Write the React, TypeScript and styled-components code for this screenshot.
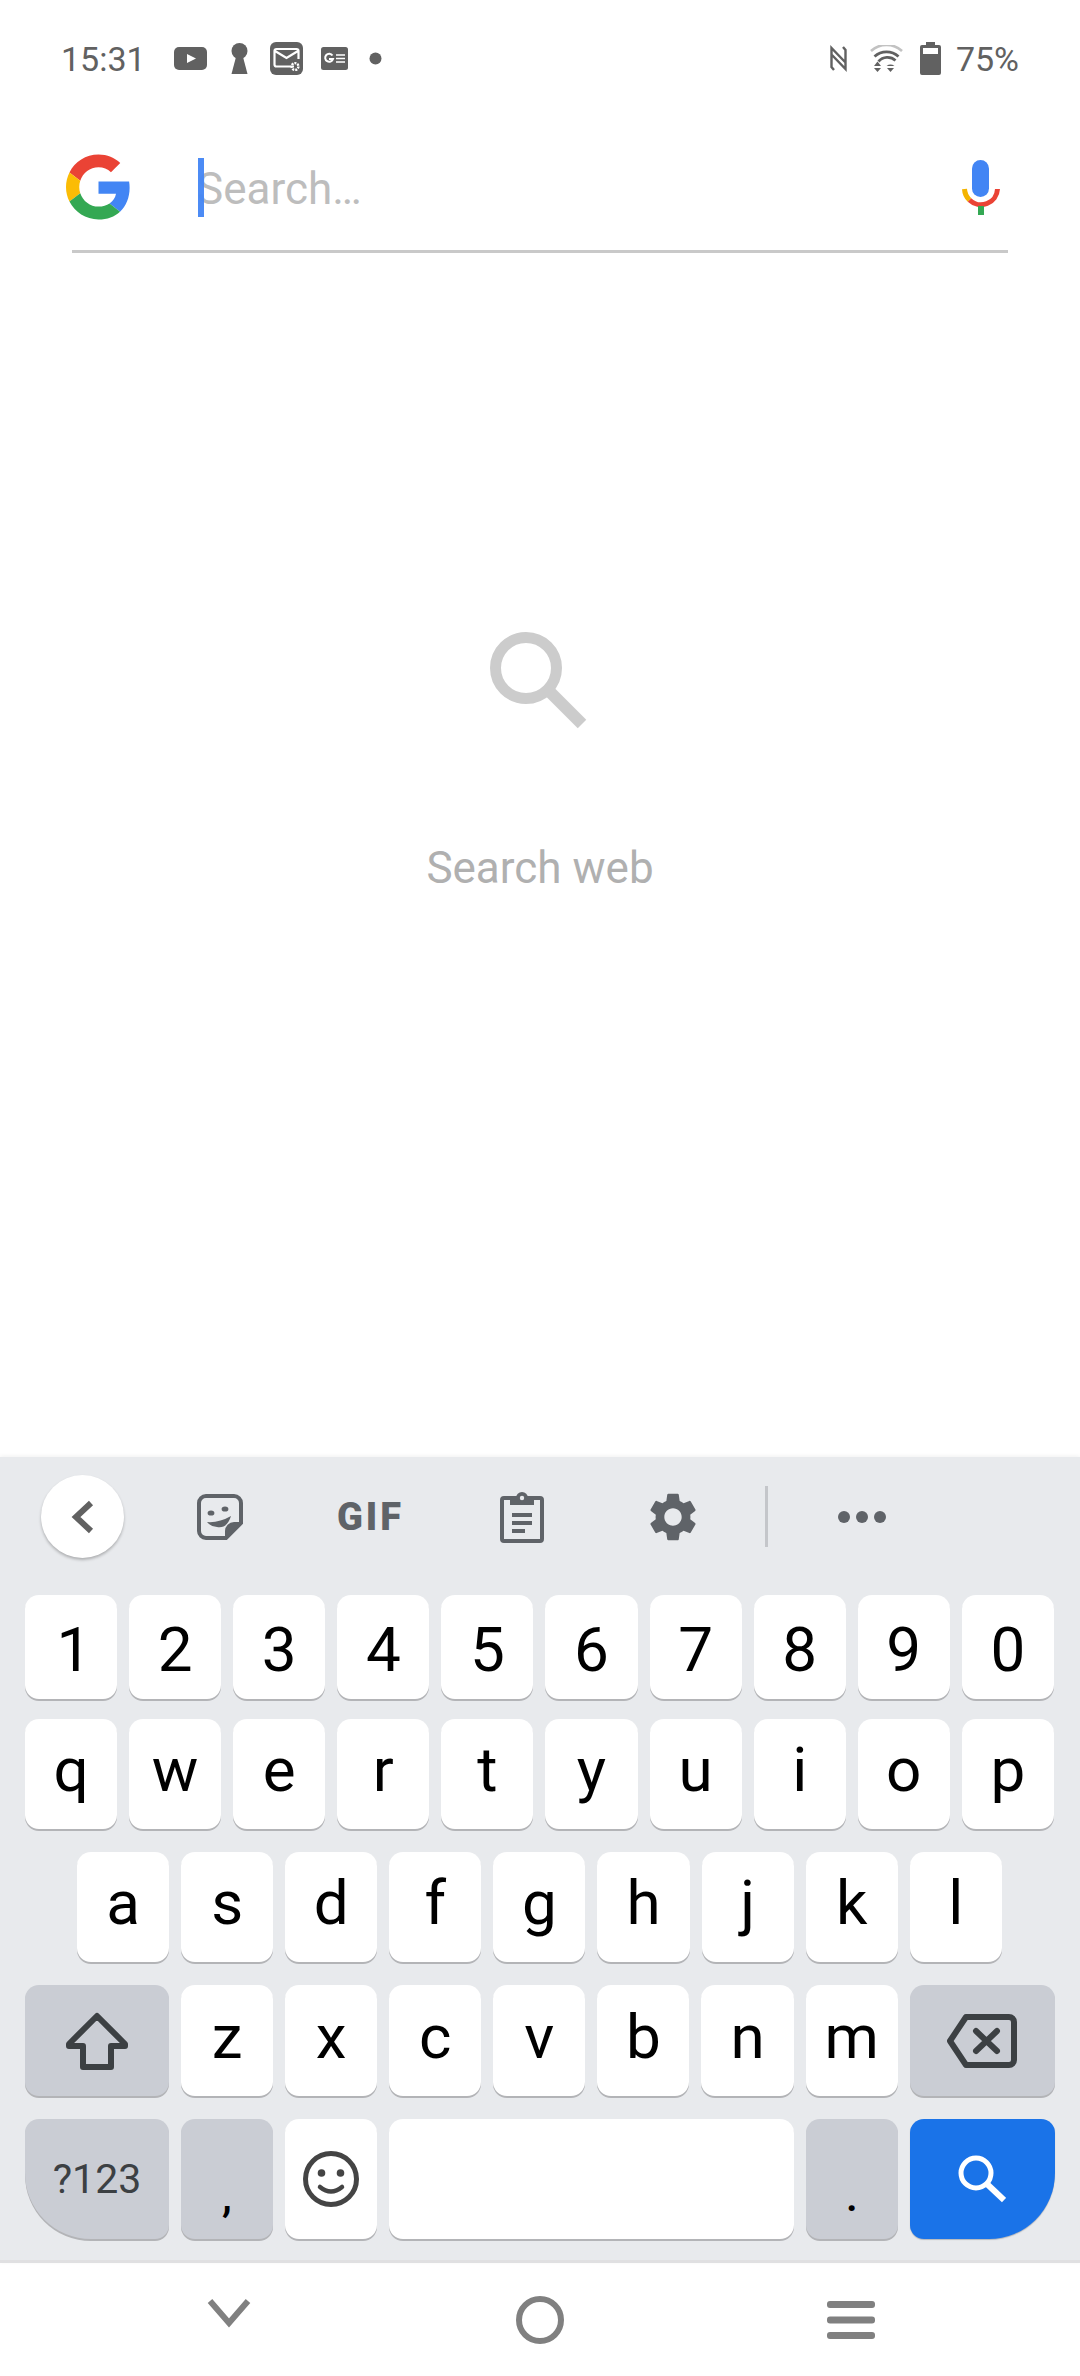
import styled, { createGlobalStyle } from 'styled-components';

const GlobalStyle = createGlobalStyle`
  html, body {
    margin: 0;
    padding: 0;
    background: #fff;
    font-family: Roboto, "Liberation Sans", sans-serif;
  }
`;

const Screen = styled.div`
  width: 1080px;
  height: 2376px;
  display: flex;
  flex-direction: column;
  overflow: hidden;
  background: #fff;
`;

const StatusBar = styled.div`
  height: 116px;
  padding: 0 61px;
  display: flex;
  align-items: center;
  color: #616161;
  font-size: 34px;
  flex-shrink: 0;
`;

const StatusGroup = styled.div<{ $push?: boolean }>`
  display: flex;
  align-items: center;
  margin-left: ${({ $push }) => ($push ? 'auto' : '0')};
`;

const StatusIcon = styled.svg<{ $gap?: number }>`
  display: block;
  margin-left: ${({ $gap }) => $gap ?? 0}px;
  fill: #616161;
`;

const StatusText = styled.span<{ $gap?: number }>`
  margin-left: ${({ $gap }) => $gap ?? 0}px;
  line-height: 36px;
  position: relative;
  top: 1px;
`;

const SearchRow = styled.div`
  height: 134px;
  box-sizing: border-box;
  padding: 8px 80px 0 66px;
  display: flex;
  align-items: center;
  flex-shrink: 0;
`;

const Cursor = styled.div`
  width: 6px;
  height: 59px;
  margin-left: 67px;
  background: #4285f4;
  opacity: 0.95;
`;

const Placeholder = styled.span`
  margin-left: -7px;
  padding-top: 4px;
  font-size: 44px;
  line-height: 52px;
  color: #bdbdbd;
  flex: 1;
`;

const Divider = styled.div`
  height: 3px;
  margin: 0 72px;
  background: #c9c9c9;
  flex-shrink: 0;
`;

const EmptyState = styled.main`
  flex: 1;
  padding-top: 379px;
  display: flex;
  flex-direction: column;
  align-items: center;
`;

const EmptyText = styled.div`
  margin-top: 110px;
  font-size: 44px;
  line-height: 52px;
  color: #b0b0b0;
`;

const Keyboard = styled.section`
  height: 803px;
  flex-shrink: 0;
  background: #e8eaed;
  border-bottom: 3px solid #e0e0e2;
  box-shadow: 0 -1px 4px rgba(0, 0, 0, 0.06);
`;

const Strip = styled.div`
  height: 119px;
  padding-left: 41px;
  display: flex;
  align-items: center;
`;

const BackButton = styled.div`
  width: 83px;
  height: 83px;
  margin-right: 20px;
  border-radius: 50%;
  background: #fff;
  box-shadow: 0 2px 3px rgba(0, 0, 0, 0.25);
  display: flex;
  align-items: center;
  justify-content: center;
`;

const StripSlot = styled.div`
  width: 151px;
  display: flex;
  align-items: center;
  justify-content: center;
`;

const GifLabel = styled.span`
  font-size: 38px;
  font-weight: 900;
  letter-spacing: 3px;
  line-height: 40px;
  color: #5f6368;
`;

const StripSeparator = styled.div`
  width: 3px;
  height: 61px;
  margin-left: 17px;
  background: #c4c6ca;
`;

const MoreDots = styled.div`
  margin-left: 70px;
  display: flex;
  gap: 6px;
`;

const MoreDot = styled.span`
  width: 12px;
  height: 12px;
  border-radius: 50%;
  background: #5f6368;
`;

const KeyRows = styled.div`
  padding: 19px 25px 0;
  display: flex;
  flex-direction: column;
`;

const Row = styled.div<{ $height: number; $top?: number; $inset?: number }>`
  height: ${({ $height }) => $height}px;
  margin-top: ${({ $top }) => $top ?? 0}px;
  padding-left: ${({ $inset }) => $inset ?? 0}px;
  display: flex;
  gap: 12px;
`;

type Tone = 'light' | 'fn' | 'action';

const toneBg: Record<Tone, string> = {
  light: '#fff',
  fn: '#cacdd4',
  action: '#1a73e8',
};

const Key = styled.div<{
  $tone?: Tone;
  $width?: number;
  $corner?: 'left' | 'right';
  $shift?: number;
  $nudge?: number;
}>`
  width: ${({ $width }) => $width ?? 92.1}px;
  height: 100%;
  box-sizing: border-box;
  padding-bottom: ${({ $shift }) => ($shift && $shift > 0 ? $shift : 0)}px;
  padding-top: ${({ $shift }) => ($shift && $shift < 0 ? -$shift : 0)}px;
  padding-left: ${({ $nudge }) => $nudge ?? 0}px;
  display: flex;
  align-items: center;
  justify-content: center;
  background: ${({ $tone }) => toneBg[$tone ?? 'light']};
  color: #000;
  font-size: 62px;
  line-height: 1;
  border-radius: 14px;
  border-bottom-left-radius: ${({ $corner }) => ($corner === 'left' ? '66px' : '14px')};
  border-bottom-right-radius: ${({ $corner }) => ($corner === 'right' ? '66px' : '14px')};
  box-shadow: ${({ $tone }) => ($tone === 'action' ? '0 1px 1px #b5b7bb' : '0 2px 0 #b3b4b7')};
`;

const SymbolLabel = styled.span`
  font-size: 41px;
  color: #3c4043;
`;

const PunctLabel = styled.span`
  font-size: 44px;
  font-weight: 500;
  position: relative;
  top: 17px;
`;

const NavBar = styled.nav`
  height: 113px;
  flex-shrink: 0;
  display: grid;
  grid-template-columns: repeat(3, 311px);
  justify-content: center;
  align-items: center;
  justify-items: center;
`;

const NavIcon = styled.svg`
  display: block;
`;

const numbers = '1234567890'.split('');
const topLetters = 'qwertyuiop'.split('');
const midLetters = 'asdfghjkl'.split('');
const lowLetters = 'zxcvbnm'.split('');

const GoogleLogo = () => (
  <svg width="65" height="66" viewBox="0 0 48 48">
    <path fill="#EA4335" d="M24 9.5c3.54 0 6.71 1.22 9.21 3.6l6.85-6.85C35.9 2.38 30.47 0 24 0 14.62 0 6.51 5.38 2.56 13.22l7.98 6.19C12.43 13.72 17.74 9.5 24 9.5z" />
    <path fill="#4285F4" d="M46.98 24.55c0-1.57-.15-3.09-.38-4.55H24v9.02h12.94c-.58 2.96-2.26 5.48-4.78 7.18l7.73 6c4.51-4.18 7.09-10.36 7.09-17.65z" />
    <path fill="#FBBC05" d="M10.53 28.59c-.48-1.45-.76-2.99-.76-4.59s.27-3.14.76-4.59l-7.98-6.19C.92 16.46 0 20.12 0 24c0 3.88.92 7.54 2.56 10.78l7.97-6.19z" />
    <path fill="#34A853" d="M24 48c6.48 0 11.93-2.13 15.89-5.81l-7.73-6c-2.15 1.45-4.92 2.3-8.16 2.3-6.26 0-11.57-4.22-13.47-9.91l-7.98 6.19C6.51 42.62 14.62 48 24 48z" />
  </svg>
);

const MicIcon = () => (
  <svg width="38" height="55" viewBox="0 0 38 55">
    <rect x="10" y="0" width="17" height="37" rx="8.5" fill="#4285f4" />
    <path d="M2.5 29 A16.5 16.5 0 0 0 7.5 40" fill="none" stroke="#f4b400" strokeWidth="5" />
    <path d="M7.5 40 A16.5 16.5 0 0 0 35.5 29" fill="none" stroke="#ea4335" strokeWidth="5" />
    <rect x="16" y="46" width="6" height="9" fill="#34a853" />
  </svg>
);

const EmptySearchIcon = () => (
  <svg width="100" height="100" viewBox="0 0 100 100">
    <circle cx="36" cy="36" r="30.5" fill="none" stroke="#cccccc" strokeWidth="11" />
    <path d="M60 60 L92 92" stroke="#cccccc" strokeWidth="12" fill="none" />
  </svg>
);

const BackspaceIcon = () => (
  <svg width="70" height="54" viewBox="0 0 70 54" fill="none" stroke="#3c4043" strokeWidth="6" strokeLinejoin="round" strokeLinecap="round">
    <path d="M19 3 H62 a5 5 0 0 1 5 5 V46 a5 5 0 0 1 -5 5 H19 L3 27 Z" />
    <path d="M29 17 L50 37 M50 17 L29 37" />
  </svg>
);

const ShiftIcon = () => (
  <svg width="62" height="58" viewBox="0 0 62 58" fill="none" stroke="#3c4043" strokeWidth="6" strokeLinejoin="round">
    <path d="M31 4 L59 32 V34 H45 V55 H17 V34 H3 V32 Z" />
  </svg>
);

const SmileIcon = () => (
  <svg width="56" height="56" viewBox="0 0 56 56" fill="none">
    <circle cx="28" cy="28" r="25.5" stroke="#444" strokeWidth="5" />
    <circle cx="18.5" cy="22" r="3.8" fill="#444" />
    <circle cx="37.5" cy="22" r="3.8" fill="#444" />
    <path d="M17 36 Q28 45 39 36" stroke="#444" strokeWidth="4.5" strokeLinecap="round" />
  </svg>
);

const SearchKeyIcon = () => (
  <svg width="48" height="48" viewBox="0 0 48 48" fill="none" stroke="#fff">
    <circle cx="18" cy="18" r="15" strokeWidth="5" />
    <path d="M29 29 L46 45" strokeWidth="6" />
  </svg>
);

export default function App() {
  return (
    <Screen>
      <GlobalStyle />
      <StatusBar>
        <StatusGroup>
          <StatusText>15:31</StatusText>
          <StatusIcon $gap={28} width="33" height="23" viewBox="0 0 33 23">
            <rect width="33" height="23" rx="5" />
            <path d="M13 7 L22 11.5 L13 16 Z" fill="#fff" />
          </StatusIcon>
          <StatusIcon $gap={24} width="17" height="31" viewBox="0 0 17 31">
            <circle cx="8.5" cy="8" r="8" />
            <path d="M5.5 12 H11.5 L16.5 31 H0.5 Z" />
          </StatusIcon>
          <StatusIcon $gap={22} width="33" height="33" viewBox="0 0 33 33">
            <rect width="33" height="33" rx="6" />
            <path d="M24 24.5 H6.5 a2 2 0 0 1 -2 -2 V9 a2 2 0 0 1 2 -2 H26.5 a2 2 0 0 1 2 2 V17 M5 9 L16.5 16 L28 9" fill="none" stroke="#fff" strokeWidth="2.2" />
            <circle cx="25" cy="24.5" r="3.4" fill="none" stroke="#fff" strokeWidth="2.4" strokeDasharray="2 1" />
          </StatusIcon>
          <StatusIcon $gap={18} width="27" height="23" viewBox="0 0 27 23">
            <rect width="27" height="23" rx="2.5" />
            <path d="M11.5 8.5 A4 4 0 1 0 12 12 H8" fill="none" stroke="#fff" strokeWidth="2" />
            <path d="M15 8 H24 M15 11.5 H24 M15 15 H24" stroke="#fff" strokeWidth="1.6" />
          </StatusIcon>
          <StatusIcon $gap={21} width="13" height="13" viewBox="0 0 13 13">
            <circle cx="6.5" cy="6.5" r="6" />
          </StatusIcon>
        </StatusGroup>
        <StatusGroup $push>
          <StatusIcon width="17" height="27" viewBox="0 0 17 27">
            <path d="M4 25 L1.5 22 V3 L15 17 M13 2 L15.5 5 V24 L2 10" fill="none" stroke="#616161" strokeWidth="2.4" />
          </StatusIcon>
          <StatusIcon $gap={23} width="33" height="27" viewBox="0 0 33 27">
            <path d="M1 6 A23 23 0 0 1 32 6" fill="none" stroke="#c2c2c2" strokeWidth="2.6" />
            <path d="M4.5 11.5 A18 18 0 0 1 28.5 11.5" fill="none" stroke="#616161" strokeWidth="2.8" />
            <path d="M8.5 16.5 A12 12 0 0 1 25.5 15.5" fill="none" stroke="#616161" strokeWidth="2.8" />
            <path d="M4 21 L7.5 16.5 L11 21 Z M4 23 H11 L7.5 27 Z M17 23 H24 L20.5 27 Z M16.5 21 A7 7 0 0 1 24.5 21 Z" />
          </StatusIcon>
          <StatusIcon $gap={17} width="21" height="33" viewBox="0 0 21 33">
            <path d="M6 0 H15 V3 H19 a2 2 0 0 1 2 2 V31 a2 2 0 0 1 -2 2 H2 a2 2 0 0 1 -2 -2 V5 a2 2 0 0 1 2 -2 H6 Z" />
            <rect x="3" y="6" width="15" height="6" fill="#fff" />
          </StatusIcon>
          <StatusText $gap={15}>75%</StatusText>
        </StatusGroup>
      </StatusBar>

      <SearchRow>
        <GoogleLogo />
        <Cursor />
        <Placeholder>Search…</Placeholder>
        <MicIcon />
      </SearchRow>
      <Divider />

      <EmptyState>
        <EmptySearchIcon />
        <EmptyText>Search web</EmptyText>
      </EmptyState>

      <Keyboard>
        <Strip>
          <BackButton>
            <svg width="24" height="34" viewBox="0 0 24 34" fill="none">
              <path d="M20 3 L5 17 L20 31" stroke="#616161" strokeWidth="6" />
            </svg>
          </BackButton>
          <StripSlot>
            <svg width="46" height="46" viewBox="0 0 46 46" fill="none" stroke="#5f6368">
              <path d="M9 2 H37 a7 7 0 0 1 7 7 V29 L29 44 H9 a7 7 0 0 1 -7 -7 V9 a7 7 0 0 1 7 -7 Z" strokeWidth="4" />
              <path d="M45 28 H37 a9 9 0 0 0 -9 9 V45 Z" fill="#5f6368" stroke="none" />
              <ellipse cx="14" cy="19" rx="3.4" ry="2.6" fill="#5f6368" stroke="none" />
              <ellipse cx="28" cy="15" rx="3.4" ry="2.6" fill="#5f6368" stroke="none" />
              <path d="M10 28 Q22 29 34 22 Q30 35 20 33 Q14 33 10 28 Z" fill="#5f6368" stroke="none" />
            </svg>
          </StripSlot>
          <StripSlot>
            <GifLabel>GIF</GifLabel>
          </StripSlot>
          <StripSlot>
            <svg width="44" height="52" viewBox="0 0 44 52" fill="none">
              <rect x="2" y="7" width="40" height="43" rx="2" stroke="#5f6368" strokeWidth="4" />
              <path d="M10 7 H16 a6 6 0 0 1 12 0 H34 V14 H10 Z" fill="#5f6368" />
              <circle cx="22" cy="7" r="2.2" fill="#e8eaed" />
              <path d="M12 24 H32 M12 32 H32 M12 40 H25" stroke="#5f6368" strokeWidth="4" />
            </svg>
          </StripSlot>
          <StripSlot>
            <svg width="58" height="58" viewBox="0 0 24 24" fill="#5f6368">
              <path d="M19.14 12.94c.04-.3.06-.61.06-.94 0-.32-.02-.64-.07-.94l2.03-1.58c.18-.14.23-.41.12-.61l-1.92-3.32c-.12-.22-.37-.29-.59-.22l-2.39.96c-.5-.38-1.03-.7-1.62-.94l-.36-2.54c-.04-.24-.24-.41-.48-.41h-3.84c-.24 0-.43.17-.47.41l-.36 2.54c-.59.24-1.13.57-1.62.94l-2.39-.96c-.22-.08-.47 0-.59.22L2.74 8.87c-.12.21-.08.47.12.61l2.03 1.58c-.05.3-.09.63-.09.94s.02.64.07.94l-2.03 1.58c-.18.14-.23.41-.12.61l1.92 3.32c.12.22.37.29.59.22l2.39-.96c.5.38 1.03.7 1.62.94l.36 2.54c.05.24.24.41.48.41h3.84c.24 0 .44-.17.47-.41l.36-2.54c.59-.24 1.13-.56 1.62-.94l2.39.96c.22.08.47 0 .59-.22l1.92-3.32c.12-.22.07-.47-.12-.61l-2.01-1.58zM12 15.6c-1.98 0-3.6-1.62-3.6-3.6s1.62-3.6 3.6-3.6 3.6 1.62 3.6 3.6-1.62 3.6-3.6 3.6z" />
            </svg>
          </StripSlot>
          <StripSeparator />
          <MoreDots>
            <MoreDot />
            <MoreDot />
            <MoreDot />
          </MoreDots>
        </Strip>

        <KeyRows>
          <Row $height={104}>
            {numbers.map(n => <Key key={n} $shift={-5} $nudge={n === '1' ? 6 : 0}>{n}</Key>)}
          </Row>
          <Row $height={110} $top={20}>
            {topLetters.map(l => <Key key={l} $shift={8}>{l}</Key>)}
          </Row>
          <Row $height={110} $top={23} $inset={52}>
            {midLetters.map(l => <Key key={l} $shift={8}>{l}</Key>)}
          </Row>
          <Row $height={111} $top={23}>
            <Key $tone="fn" $width={144}><ShiftIcon /></Key>
            {lowLetters.map(l => <Key key={l} $shift={8}>{l}</Key>)}
            <Key $tone="fn" $width={145}><BackspaceIcon /></Key>
          </Row>
          <Row $height={120} $top={23}>
            <Key $tone="fn" $width={144} $corner="left"><SymbolLabel>?123</SymbolLabel></Key>
            <Key $tone="fn"><PunctLabel>,</PunctLabel></Key>
            <Key><SmileIcon /></Key>
            <Key $width={405} />
            <Key $tone="fn"><PunctLabel>.</PunctLabel></Key>
            <Key $tone="action" $width={145} $corner="right"><SearchKeyIcon /></Key>
          </Row>
        </KeyRows>
      </Keyboard>

      <NavBar>
        <NavIcon width="48" height="48" viewBox="0 0 48 48" fill="none">
          <path d="M5 5 L24 27 L43 5" stroke="#808080" strokeWidth="6" />
        </NavIcon>
        <NavIcon width="48" height="48" viewBox="0 0 48 48" fill="none">
          <circle cx="24" cy="24" r="21" stroke="#808080" strokeWidth="6" />
        </NavIcon>
        <NavIcon width="48" height="38" viewBox="0 0 48 38" fill="#808080">
          <rect x="0" y="0" width="48" height="7" rx="3" />
          <rect x="0" y="15.5" width="48" height="7" rx="3" />
          <rect x="0" y="31" width="48" height="7" rx="3" />
        </NavIcon>
      </NavBar>
    </Screen>
  );
}
